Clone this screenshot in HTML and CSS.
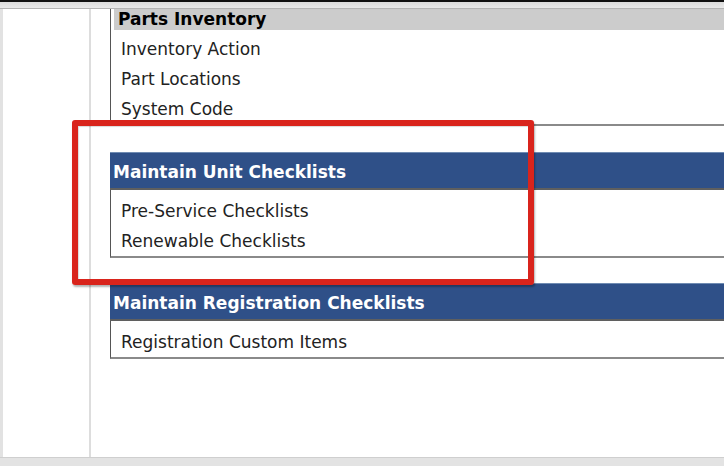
FILE: index.html
```html
<!DOCTYPE html>
<html lang="en">
<head>
<meta charset="utf-8">
<title>Setup Menu</title>
<link rel="stylesheet" href="styles.css">
</head>
<body>
  <div class="frame-top"></div>
  <div class="window">
    <aside class="sidebar"></aside>
    <main class="content">
      <section class="panel panel-cut">
        <div class="sub-head">Parts Inventory</div>
        <ul class="items">
          <li>Inventory Action</li>
          <li>Part Locations</li>
          <li>System Code</li>
        </ul>
      </section>

      <section class="group">
        <h2 class="group-head">Maintain Unit Checklists</h2>
        <ul class="items panel">
          <li>Pre-Service Checklists</li>
          <li>Renewable Checklists</li>
        </ul>
      </section>

      <section class="group">
        <h2 class="group-head">Maintain Registration Checklists</h2>
        <ul class="items panel">
          <li>Registration Custom Items</li>
        </ul>
      </section>
    </main>
  </div>
  <div class="frame-bottom"></div>
  <div class="annotation"></div>
</body>
</html>
```

FILE: styles.css
```css
html, body {
  margin: 0;
  padding: 0;
}

body {
  width: 724px;
  height: 466px;
  overflow: hidden;
  display: flex;
  flex-direction: column;
  background: #ffffff;
  font-family: "DejaVu Sans", Verdana, sans-serif;
  font-size: 17px;
  color: #222222;
  position: relative;
}

.frame-top {
  height: 9px;
  box-sizing: border-box;
  border-top: 2px solid #111111;
  border-bottom: 1px solid #b4b4b4;
  background: linear-gradient(#dcdcdc, #e9e9e9);
  flex: none;
}

.window {
  flex: 1;
  display: flex;
  min-height: 0;
  border-left: 3px solid #e2e2e2;
}

.sidebar {
  width: 86px;
  flex: none;
  border-right: 2px solid #dddddd;
  background: #ffffff;
}

.content {
  flex: 1;
  min-width: 0;
  overflow: hidden;
  padding-left: 19px;
}

.panel {
  border-left: 1px solid #555555;
  border-bottom: 2px solid #8a8a8a;
}

.panel-cut {
  margin-bottom: 26px;
}

.sub-head {
  margin-left: 3px;
  height: 21px;
  line-height: 21px;
  padding-left: 4px;
  background: #cccccc;
  color: #000000;
  font-weight: bold;
}

.items {
  list-style: none;
  margin: 0;
  padding: 4px 0 0 0;
}

.items li {
  height: 30px;
  line-height: 30px;
  padding-left: 10px;
  white-space: nowrap;
}

.group {
  margin-bottom: 25px;
}

.group .items {
  padding-top: 6px;
}

.group-head {
  margin: 0;
  height: 38px;
  box-sizing: border-box;
  border-top: 1px solid #6f8bb2;
  border-bottom: 2px solid #5f5f5f;
  padding: 3px 0 0 3px;
  line-height: 32px;
  background: #2f5088;
  color: #ffffff;
  font-size: 17px;
  font-weight: bold;
  white-space: nowrap;
}

.frame-bottom {
  height: 9px;
  flex: none;
  box-sizing: border-box;
  border-top: 1px solid #cfcfcf;
  background: #e3e3e3;
}

.annotation {
  position: absolute;
  left: 72px;
  top: 120px;
  width: 462px;
  height: 165px;
  box-sizing: border-box;
  border: 6px solid #d9241c;
  border-radius: 3px;
  box-shadow: 1px 2px 2px rgba(0, 0, 0, 0.3), inset 1px 1px 1px rgba(0, 0, 0, 0.15);
}
```
